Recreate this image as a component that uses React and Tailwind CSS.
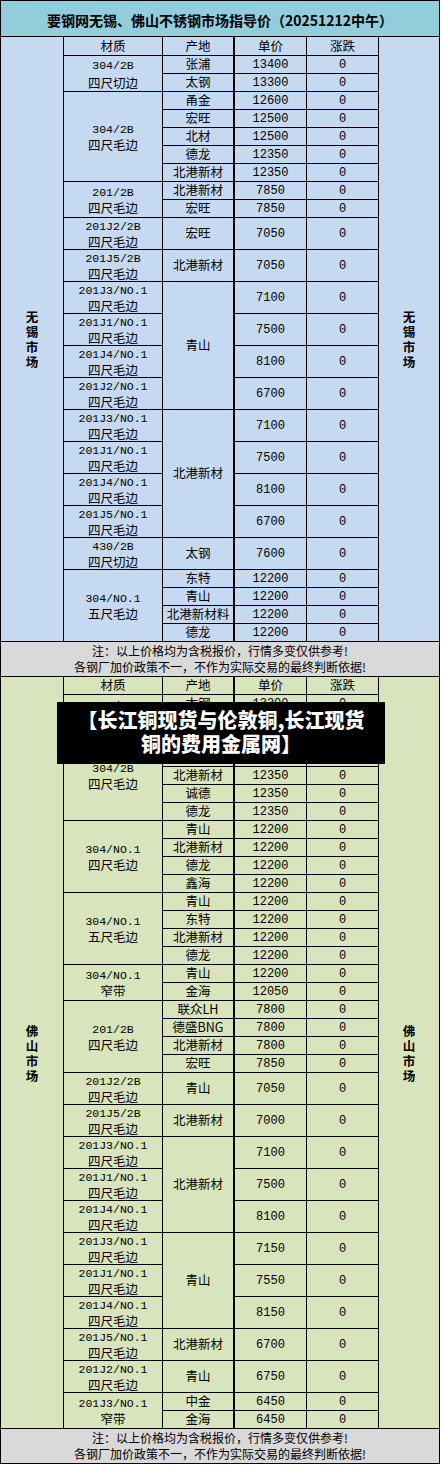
import React from "react";

const WUXI = [
  { mat: ["304/2B", "四尺切边"], ms: 2, lead: "leading-[17px]", org: "张浦", p: "13400" },
  { org: "太钢", p: "13300" },
  { mat: ["304/2B", "四尺毛边"], ms: 5, org: "甬金", p: "12600" },
  { org: "宏旺", p: "12500" },
  { org: "北材", p: "12500" },
  { org: "德龙", p: "12350" },
  { org: "北港新材", p: "12350" },
  { mat: ["201/2B", "四尺毛边"], ms: 2, org: "北港新材", p: "7850" },
  { org: "宏旺", p: "7850" },
  { mat: ["201J2/2B", "四尺毛边"], org: "宏旺", p: "7050", d: true },
  { mat: ["201J5/2B", "四尺毛边"], org: "北港新材", p: "7050", d: true },
  { mat: ["201J3/NO.1", "四尺毛边"], org: "青山", os: 4, p: "7100", d: true },
  { mat: ["201J1/NO.1", "四尺毛边"], p: "7500", d: true },
  { mat: ["201J4/NO.1", "四尺毛边"], p: "8100", d: true },
  { mat: ["201J2/NO.1", "四尺毛边"], p: "6700", d: true },
  { mat: ["201J3/NO.1", "四尺毛边"], org: "北港新材", os: 4, p: "7100", d: true },
  { mat: ["201J1/NO.1", "四尺毛边"], p: "7500", d: true },
  { mat: ["201J4/NO.1", "四尺毛边"], p: "8100", d: true },
  { mat: ["201J5/NO.1", "四尺毛边"], p: "6700", d: true },
  { mat: ["430/2B", "四尺切边"], org: "太钢", p: "7600", d: true },
  { mat: ["304/NO.1", "五尺毛边"], ms: 4, org: "东特", p: "12200" },
  { org: "青山", p: "12200" },
  { org: "北港新材料", p: "12200" },
  { org: "德龙", p: "12200" },
];

const FOSHAN = [
  { mat: ["304/2B", "四尺切边"], ms: 2, org: "太钢", p: "13300" },
  { org: "张浦", p: "13400" },
  { mat: ["304/2B", "四尺毛边"], ms: 5, org: "甬金", p: "12600" },
  { org: "宏旺", p: "12500" },
  { org: "北港新材", p: "12350" },
  { org: "诚德", p: "12350" },
  { org: "德龙", p: "12350" },
  { mat: ["304/NO.1", "四尺毛边"], ms: 4, org: "青山", p: "12200" },
  { org: "北港新材", p: "12200" },
  { org: "德龙", p: "12200" },
  { org: "鑫海", p: "12200" },
  { mat: ["304/NO.1", "五尺毛边"], ms: 4, org: "青山", p: "12200" },
  { org: "东特", p: "12200" },
  { org: "北港新材", p: "12200" },
  { org: "德龙", p: "12200" },
  { mat: ["304/NO.1", "窄带"], ms: 2, org: "青山", p: "12200" },
  { org: "金海", p: "12050" },
  { mat: ["201/2B", "四尺毛边"], ms: 4, org: "联众LH", p: "7800" },
  { org: "德盛BNG", p: "7800" },
  { org: "北港新材", p: "7800" },
  { org: "宏旺", p: "7850" },
  { mat: ["201J2/2B", "四尺毛边"], org: "青山", p: "7050", d: true },
  { mat: ["201J5/2B", "四尺毛边"], org: "北港新材", p: "7000", d: true },
  { mat: ["201J3/NO.1", "四尺毛边"], org: "北港新材", os: 3, p: "7100", d: true },
  { mat: ["201J1/NO.1", "四尺毛边"], p: "7500", d: true },
  { mat: ["201J4/NO.1", "四尺毛边"], p: "8100", d: true },
  { mat: ["201J3/NO.1", "四尺毛边"], org: "青山", os: 3, p: "7150", d: true },
  { mat: ["201J1/NO.1", "四尺毛边"], p: "7550", d: true },
  { mat: ["201J4/NO.1", "四尺毛边"], p: "8150", d: true },
  { mat: ["201J5/NO.1", "四尺毛边"], org: "北港新材", p: "6700", d: true },
  { mat: ["201J2/NO.1", "四尺毛边"], org: "青山", p: "6750", d: true },
  { mat: ["201J3/NO.1", "窄带"], ms: 2, org: "中金", p: "6450" },
  { org: "金海", p: "6450" },
];

const SPAN = { 1: "", 2: "row-span-2", 3: "row-span-3", 4: "row-span-4", 5: "row-span-5" };

const MONO = "font-['Liberation_Mono','Noto_Sans_CJK_SC',monospace]";

function SideLabel({ text }) {
  return (
    <div className="flex flex-col items-center text-[12.5px] font-bold leading-[15px] text-black">
      {text.split("").map((c, i) => (
        <span key={i}>{c}</span>
      ))}
    </div>
  );
}

function Table({ rows, headH }) {
  const cells = [];
  const head = ["材质", "产地", "单价", "涨跌"];
  const headBorder = ["border-r border-black", "border-r-2 border-black", "border-r border-black", ""];
  head.forEach((h, i) => {
    cells.push(
      <div
        key={"h" + i}
        className={`${headH} ${headBorder[i]} flex items-center justify-center text-[12.5px] leading-none`}
      >
        {h}
      </div>
    );
  });
  rows.forEach((r, i) => {
    const h = r.d ? "h-[32px]" : "h-[18px]";
    if (r.mat) {
      cells.push(
        <div
          key={"m" + i}
          className={`${SPAN[r.ms || 1]} min-h-0 border-t border-r border-black flex flex-col items-center justify-center ${r.lead || "leading-[15px]"} ${r.d ? "pt-[1px]" : ""}`}
        >
          <span className={`${MONO} text-[11.5px]`}>{r.mat[0]}</span>
          <span className="text-[12.5px]">{r.mat[1]}</span>
        </div>
      );
    }
    if (r.org) {
      cells.push(
        <div
          key={"o" + i}
          className={`${SPAN[r.os || 1]} min-h-0 border-t border-r-2 border-black flex items-center justify-center text-[12.5px] leading-none whitespace-nowrap`}
        >
          {r.org}
        </div>
      );
    }
    cells.push(
      <div
        key={"p" + i}
        className={`${h} border-t border-r border-black flex items-center justify-center ${MONO} text-[12px] leading-none`}
      >
        {r.p}
      </div>
    );
    cells.push(
      <div
        key={"c" + i}
        className={`${h} border-t border-black flex items-center justify-center ${MONO} text-[12px] leading-none`}
      >
        0
      </div>
    );
  });
  return (
    <div className="grid grid-cols-[99px_72px_72px_71px] auto-rows-min border-x border-black">{cells}</div>
  );
}

function Section({ rows, bg, label, headH }) {
  return (
    <div className={`flex border-b border-black ${bg}`}>
      <div className="w-[62px] flex items-center justify-center">
        <SideLabel text={label} />
      </div>
      <Table rows={rows} headH={headH} />
      <div className="flex-1 flex items-center justify-center">
        <SideLabel text={label} />
      </div>
    </div>
  );
}

function Note() {
  return (
    <div className="h-[35px] border-b border-black bg-[#d9d9d9] flex flex-col items-center justify-center text-[12px] leading-[16.5px] text-black">
      <div>注：以上价格均为含税报价，行情多变仅供参考!</div>
      <div>各钢厂加价政策不一，不作为实际交易的最终判断依据!</div>
    </div>
  );
}

export default function App() {
  return (
    <div className="bg-white min-h-[1466px] font-['Noto_Sans_CJK_SC',sans-serif] text-black">
      <div className="relative w-[440px] border-x border-t border-black">
        <div className="h-[36px] border-b border-black bg-[#92cddc] flex items-center justify-center pt-[3px] text-[14px] font-bold leading-none">
          要钢网无锡、佛山不锈钢市场指导价（20251212中午）
        </div>
        <Section rows={WUXI} bg="bg-[#c5d9f1]" label="无锡市场" headH="h-[18px]" />
        <Note />
        <Section rows={FOSHAN} bg="bg-[#d8e4bc]" label="佛山市场" headH="h-[17px]" />
        <Note />
        <div className="absolute left-[56px] top-[701px] w-[328px] h-[62px] bg-black flex flex-col items-center justify-center text-white font-black text-[20px] leading-[24px] pb-[2px]">
          <div>【长江铜现货与伦敦铜,长江现货</div>
          <div>铜的费用金属网】</div>
        </div>
      </div>
    </div>
  );
}
